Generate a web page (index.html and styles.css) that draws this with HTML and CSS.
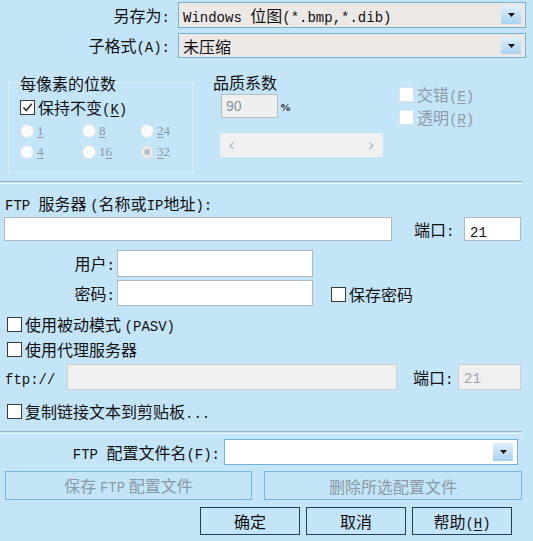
FILE: index.html
```html
<!DOCTYPE html>
<html lang="zh-CN">
<head>
<meta charset="utf-8">
<title>另存为</title>
<link rel="stylesheet" href="styles.css">
</head>
<body>
<div class="dlg">
  <div class="row r1">
    <span class="lbl lw170">另存为<span class="m">:</span></span>
    <div class="combo ro"><span class="ct"><span class="m">Windows </span>位图<span class="m">(*.bmp,*.dib)</span></span><i class="dd"><svg width="7" height="4" viewBox="0 0 7 4"><path d="M0 0H7L3.5 4Z" fill="#111"/></svg></i></div>
  </div>
  <div class="row r2">
    <span class="lbl lw170">子格式<span class="m">(A):</span></span>
    <div class="combo ro"><span class="ct">未压缩</span><i class="dd"><svg width="7" height="4" viewBox="0 0 7 4"><path d="M0 0H7L3.5 4Z" fill="#111"/></svg></i></div>
  </div>

  <div class="opts">
    <div class="group bits">
      <div class="gtitle">每像素的位数</div>
      <label class="chk keep"><span class="box on"><svg width="13" height="13" viewBox="0 0 13 13"><path d="M2.5 6.5L5.2 9.5L10.8 2.8" fill="none" stroke="#333" stroke-width="1.7"/></svg></span><span>保持不变<span class="m">(<u>K</u>)</span></span></label>
      <div class="radios">
        <label class="rad"><span class="dot"></span><span><u>1</u></span></label>
        <label class="rad"><span class="dot"></span><span><u>8</u></span></label>
        <label class="rad"><span class="dot"></span><span><u>2</u>4</span></label>
        <label class="rad"><span class="dot"></span><span><u>4</u></span></label>
        <label class="rad"><span class="dot"></span><span>1<u>6</u></span></label>
        <label class="rad"><span class="dot sel"></span><span><u>3</u>2</span></label>
      </div>
    </div>
    <div class="quality">
      <div class="gtitle">品质系数</div>
      <div class="qrow"><span class="qin">90</span><span class="pct">%</span></div>
      <div class="scroll"><span>&lsaquo;</span><span>&rsaquo;</span></div>
    </div>
    <div class="flags">
      <label class="chk dis"><span class="box"></span><span>交错<span class="m">(<u>E</u>)</span></span></label>
      <label class="chk dis"><span class="box"></span><span>透明<span class="m">(<u>R</u>)</span></span></label>
    </div>
  </div>

  <div class="sep"></div>

  <div class="ftplbl"><span class="m">FTP </span>服务器 <span class="m">(</span>名称或<span class="m">IP</span>地址<span class="m">):</span></div>
  <div class="row srv">
    <span class="in server"></span>
    <span class="lbl port">端口<span class="m">:</span></span>
    <span class="in portin"><span class="m">21</span></span>
  </div>
  <div class="row user">
    <span class="lbl lw115">用户<span class="m">:</span></span>
    <span class="in uin"></span>
  </div>
  <div class="row pwd">
    <span class="lbl lw115">密码<span class="m">:</span></span>
    <span class="in uin"></span>
    <label class="chk savepw"><span class="box"></span><span>保存密码</span></label>
  </div>
  <label class="chk pasv"><span class="box"></span><span>使用被动模式 <span class="m">(PASV)</span></span></label>
  <label class="chk proxy"><span class="box"></span><span>使用代理服务器</span></label>
  <div class="row prx">
    <span class="lbl ftpp"><span class="m">ftp://</span></span>
    <span class="in disin prxin"></span>
    <span class="lbl port2">端口<span class="m">:</span></span>
    <span class="in disin portin2"><span class="m">21</span></span>
  </div>
  <label class="chk copy"><span class="box"></span><span>复制链接文本到剪贴板<span class="m">...</span></span></label>

  <div class="sep sep2"></div>

  <div class="row prof">
    <span class="lbl lw225"><span class="m">FTP </span>配置文件名<span class="m">(F):</span></span>
    <div class="combo wh"><i class="dd"><svg width="7" height="4" viewBox="0 0 7 4"><path d="M0 0H7L3.5 4Z" fill="#111"/></svg></i></div>
  </div>
  <div class="row btns2">
    <button class="btn disb b1">保存 <span class="m">FTP</span> 配置文件</button>
    <button class="btn disb b2">删除所选配置文件</button>
  </div>
  <div class="row btns">
    <button class="btn ok">确定</button>
    <button class="btn">取消</button>
    <button class="btn">帮助<span class="m">(<u>H</u>)</span></button>
  </div>
</div>
</body>
</html>
```

FILE: styles.css
```css
html, body {
  margin: 0;
  padding: 0;
}
body {
  background: #c4e4f8;
  font-family: "Noto Sans CJK SC", "Noto Sans", sans-serif;
  font-size: 16px;
  color: #111;
  width: 533px;
  height: 541px;
  overflow: hidden;
}
.dlg {
  width: 533px;
  height: 541px;
}
.m {
  font-family: "Liberation Mono", monospace;
  font-size: 14px;
  line-height: 16px;
}
u { text-decoration: underline; text-underline-offset: 2px; }

.row {
  display: flex;
  align-items: center;
}
.lbl {
  display: block;
  line-height: 20px;
  white-space: nowrap;
}
.lw170 { text-align: right; padding-right: 4px; box-sizing: border-box; margin-right: 4px; width: 174px; }

.r1 { margin-top: 2px; height: 26px; }
.r2 { margin-top: 5px; height: 25px; }

.combo {
  box-sizing: border-box;
  width: 348px;
  height: 100%;
  border: 1px solid #74b1d6;
  display: flex;
  align-items: center;
  padding-left: 4px;
  position: relative;
  line-height: 20px;
  white-space: nowrap;
}
.ct { white-space: pre; }
.combo.ro { background: #ebe8e5; }
.combo.wh { background: #fff; }
.dd {
  position: absolute;
  right: 4px;
  top: 3px;
  bottom: 3px;
  width: 20px;
  background: linear-gradient(#dff0fb, #a8d2ef);
  display: flex;
  align-items: center;
  justify-content: center;
}

/* options area */
.opts {
  display: flex;
  height: 123px;
}
.group {
  box-sizing: border-box;
  border: 1px solid #d8eefb;
}
.bits {
  margin: 24px 0 0 8px;
  width: 185px;
  height: 91px;
  padding-left: 11px;
}
.gtitle {
  margin-top: -10px;
  line-height: 20px;
  height: 20px;
}
.chk {
  display: flex;
  align-items: center;
  height: 20px;
  line-height: 20px;
  white-space: nowrap;
}
.chk > span:last-child { white-space: pre; }
.box {
  box-sizing: border-box;
  width: 15px;
  height: 15px;
  border: 1px solid #3a3a3a;
  background: #fff;
  margin-right: 3px;
  display: flex;
  align-items: center;
  justify-content: center;
  flex: none;
}
.box svg { display: block; }
.keep { margin-top: 4px; margin-left: 0; }

.radios {
  margin-top: 3px;
  display: grid;
  grid-template-columns: 62px 58px 50px;
  grid-auto-rows: 21px;
}
.rad {
  display: flex;
  align-items: center;
  font-family: "Liberation Serif", serif;
  font-size: 13px;
  color: #8a98a3;
}
.dot {
  box-sizing: border-box;
  width: 14px;
  height: 14px;
  border-radius: 50%;
  border: 1px solid #dfe6ea;
  background: #fafbfb;
  margin-right: 3px;
  display: flex;
  align-items: center;
  justify-content: center;
}
.dot.sel { background: #e9ecee; border-color: #cfd6da; }
.dot.sel::after {
  content: "";
  width: 6px;
  height: 6px;
  border-radius: 50%;
  background: #b8bfc4;
}

.quality {
  margin: 24px 0 0 20px;
  width: 172px;
}
.qrow {
  display: flex;
  align-items: center;
  margin-top: 2px;
  margin-left: 8px;
  height: 24px;
}
.qin {
  box-sizing: border-box;
  width: 57px;
  height: 24px;
  border: 1px solid #b5bcc2;
  background: #efefef;
  color: #8b949b;
  font-family: "Liberation Sans", sans-serif;
  font-size: 14px;
  line-height: 22px;
  padding-left: 4px;
}
.pct {
  font-family: "Liberation Serif", serif;
  font-size: 11px;
  font-weight: bold;
  margin-left: 2px;
  margin-top: 2px;
}
.scroll {
  margin: 15px 0 0 7px;
  width: 163px;
  height: 24px;
  background: #eef0f1;
  display: flex;
  justify-content: space-between;
  align-items: center;
  padding: 0 8px;
  box-sizing: border-box;
  color: #b4bcc2;
  font-family: "DejaVu Sans", sans-serif;
  font-size: 18px;
  line-height: 20px;
}
.flags {
  margin: 25px 0 0 14px;
}
.flags .chk { height: 23px; }
.chk.dis { color: #8d9ba6; }
.chk.dis .box { border-color: #dde5ea; background: #fff; }

.sep {
  margin-left: 0;
  width: 522px;
  height: 1px;
  border-top: 1px solid #9db0bf;
  border-bottom: 1px solid #eaf6fd;
}

.ftplbl {
  margin: 9px 0 0 5px;
  line-height: 20px;
  height: 20px;
  white-space: nowrap;
}
.in {
  box-sizing: border-box;
  display: block;
  background: #fff;
  border: 1px solid #aeb9c2;
  height: 100%;
  line-height: 22px;
  padding-left: 5px;
  white-space: nowrap;
}
.srv { margin-top: 4px; height: 24px; }
.server { margin-left: 4px; width: 388px; }
.port { margin-left: 22px; width: 50px; }
.portin { width: 57px; padding-top: 1px; }

.lw115 { width: 115px; text-align: right; margin-right: 2px; }
.user { margin-top: 9px; height: 27px; }
.pwd { margin-top: 3px; height: 26px; }
.uin { width: 196px; }
.savepw { margin-left: 18px; margin-top: 2px; }

.pasv { margin: 8px 0 0 7px; }
.proxy { margin: 5px 0 0 7px; }
.prx { margin-top: 5px; height: 26px; }
.ftpp { margin-left: 5px; width: 62px; }
.disin { background: #f0f0f0; border-color: #c9cfd3; color: #9aa3a9; }
.prxin { width: 330px; }
.port2 { margin-left: 16px; width: 45px; }
.portin2 { width: 63px; }
.copy { margin: 11px 0 0 7px; }

.sep2 { margin-top: 10px; }

.prof { margin-top: 5px; height: 26px; }
.lw225 { width: 224px; text-align: right; padding-right: 4px; box-sizing: border-box; }
.prof .combo { width: 294px; }

.btn {
  box-sizing: border-box;
  font-family: "Noto Sans CJK SC", sans-serif;
  font-size: 16px;
  background: transparent;
  border: 1px solid #253f5a;
  color: #111;
  height: 100%;
  padding: 0;
  margin: 0;
  line-height: 20px;
}
.btns2 { margin-top: 6px; height: 29px; }
.disb { border-color: #79b7dc; color: #8a9aa6; }
.b1 { margin-left: 5px; width: 247px; }
.b2 { margin-left: 12px; width: 258px; }
.btns { margin-top: 7px; height: 28px; padding-left: 200px; gap: 6px; }
.btns .btn { width: 100px; }
```
